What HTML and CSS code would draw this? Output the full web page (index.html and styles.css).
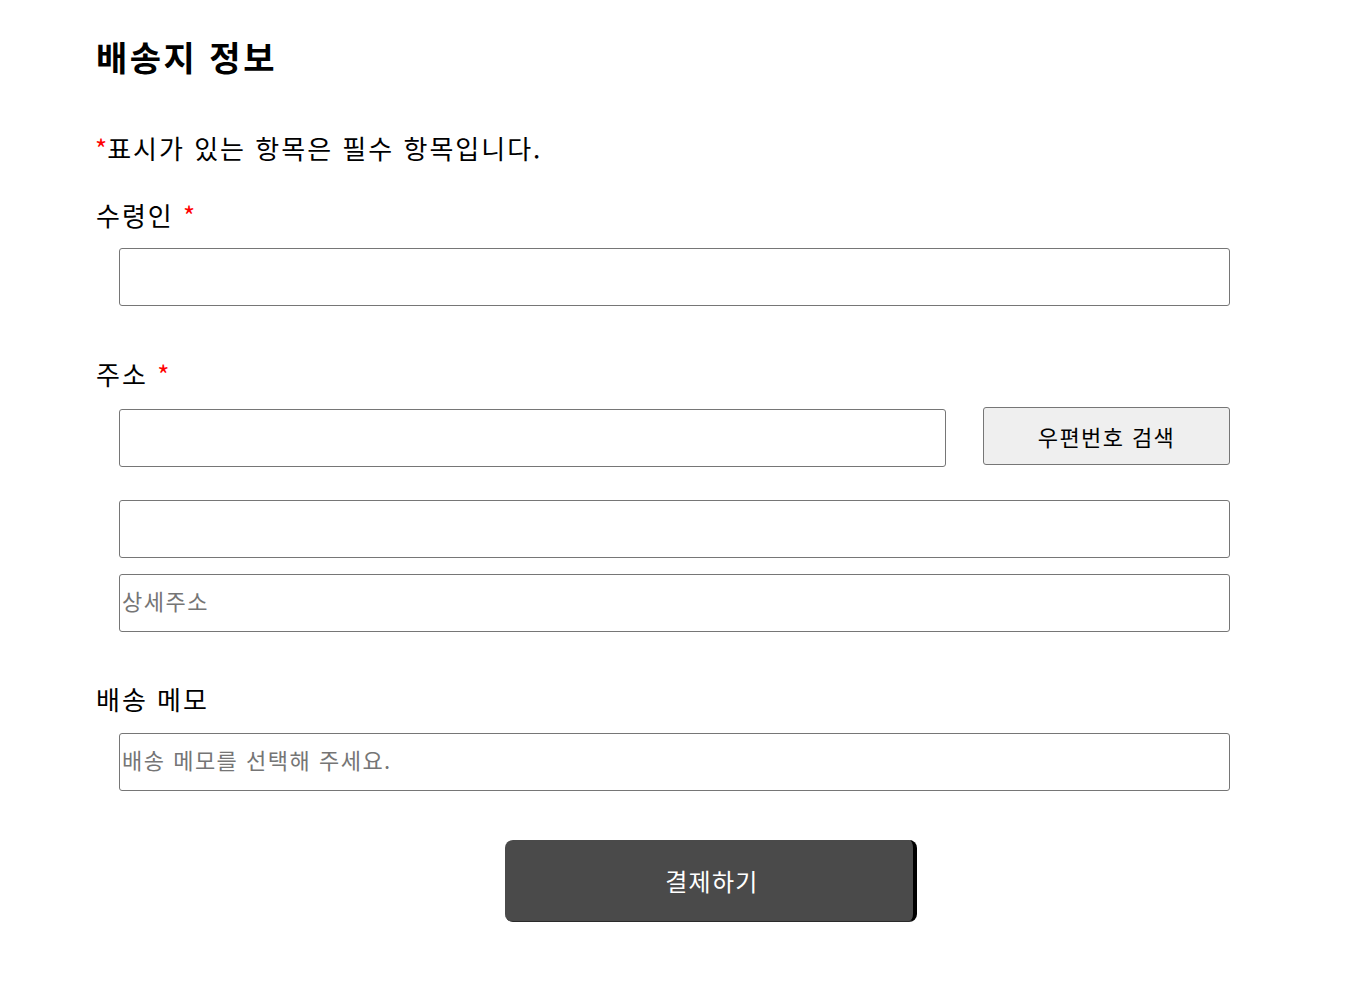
FILE: index.html
```html
<!DOCTYPE html>
<html lang="ko">
<head>
<meta charset="utf-8">
<title>배송지 정보</title>
<link rel="stylesheet" href="styles.css">
</head>
<body>
<main class="page">
  <h1 class="title">배송지 정보</h1>
  <p class="notice"><span class="req req-lead">*</span>표시가 있는 항목은 필수 항목입니다.</p>

  <section class="field field-name">
    <label class="label">수령인 <span class="req">*</span></label>
    <input class="input" type="text">
  </section>

  <section class="field field-address">
    <label class="label">주소 <span class="req">*</span></label>
    <div class="addr-row">
      <input class="input input-zip" type="text">
      <button class="zip-btn" type="button">우편번호 검색</button>
    </div>
    <input class="input input-addr1" type="text">
    <input class="input input-addr2" type="text" placeholder="상세주소">
  </section>

  <section class="field field-memo">
    <label class="label">배송 메모</label>
    <input class="input" type="text" placeholder="배송 메모를 선택해 주세요.">
  </section>

  <div class="actions">
    <button class="pay-btn" type="button">결제하기</button>
  </div>
</main>
</body>
</html>
```

FILE: styles.css
```css
html, body {
  margin: 0;
  padding: 0;
  background: #ffffff;
}

body {
  font-family: "Noto Sans CJK KR", "Noto Sans", sans-serif;
  color: #000;
}

.page {
  padding-left: 96px;
  width: 1134px;
  display: flex;
  flex-direction: column;
}

.title {
  margin: 37px 0 0 0;
  font-size: 34px;
  line-height: 40px;
  font-weight: 700;
  letter-spacing: 2.5px;
}

.notice {
  margin: 55px 0 0 -1px;
  font-size: 26px;
  line-height: 32px;
  letter-spacing: 2px;
}

.req {
  color: #ff0000;
}

.req-lead {
  letter-spacing: 0;
}

.field {
  display: flex;
  flex-direction: column;
}

.field-name {
  margin-top: 35px;
}

.field-address {
  margin-top: 52px;
}

.field-memo {
  margin-top: 51px;
}

.label {
  font-size: 26px;
  line-height: 32px;
  letter-spacing: 2px;
  margin-bottom: 17px;
}

.field-memo .label {
  margin-bottom: 18px;
}

.input {
  box-sizing: border-box;
  margin-left: 23px;
  width: 1111px;
  height: 58px;
  border: 1px solid #767676;
  border-radius: 3px;
  padding: 0 2px 6px 2px;
  font-family: "Noto Sans CJK KR", "Noto Sans", sans-serif;
  font-size: 22px;
  letter-spacing: 1.5px;
  color: #000;
  background: #fff;
  outline: none;
}

.input::placeholder {
  color: #757575;
}

.addr-row {
  display: flex;
  align-items: flex-start;
  gap: 37px;
}

.input-zip {
  width: 827px;
  margin-top: 2px;
}

.zip-btn {
  box-sizing: border-box;
  width: 247px;
  height: 58px;
  border: 1px solid #767676;
  border-radius: 3px;
  background: #efefef;
  font-family: "Noto Sans CJK KR", "Noto Sans", sans-serif;
  font-size: 22px;
  letter-spacing: 1.4px;
  color: #000;
  padding: 0;
}

.input-addr1 {
  margin-top: 33px;
}

.input-addr2 {
  margin-top: 16px;
}

.actions {
  display: flex;
  margin-top: 49px;
  padding-left: 409px;
}

.pay-btn {
  box-sizing: border-box;
  width: 412px;
  height: 82px;
  border: none;
  border-right: 4px solid #000;
  border-bottom: 1px solid #2a2a2a;
  border-radius: 8px;
  background: #4a4a4a;
  color: #fff;
  font-family: "Noto Sans CJK KR", "Noto Sans", sans-serif;
  font-size: 24px;
  letter-spacing: 1.3px;
  padding: 0 0 0 6px;
}
```
